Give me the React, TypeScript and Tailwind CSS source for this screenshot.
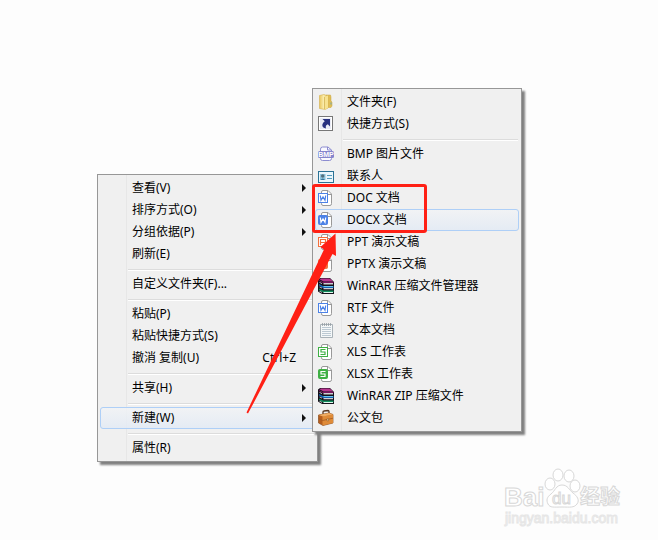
import type { ReactNode } from "react";

const ICON = "h-4 w-4 overflow-visible";

function FolderIcon() {
  return (
    <svg className={ICON} viewBox="0 0 16 16" aria-hidden="true">
      <defs>
        <linearGradient id="folder" x1="0" x2="1">
          <stop offset="0" stopColor="#e9c65c" />
          <stop offset="0.5" stopColor="#fbeeb0" />
          <stop offset="1" stopColor="#d9b545" />
        </linearGradient>
      </defs>
      <path d="M8 1h4.500l.5 2v4l1 1v4l-1 1.500H8z" fill="#e0bd55" stroke="#c9a441" strokeWidth=".5" />
      <path d="M1.500 1.500 6 .5l4 1.500v12l-3 1.500-5.500-1z" fill="url(#folder)" stroke="#d3b04d" strokeWidth=".6" />
      <path d="M6.500 3 10 1.500v12.500l-3.200 1.500z" fill="#f7e391" />
      <path d="M6.500 3v12" stroke="#c9a441" strokeWidth=".6" />
      <path d="M13 8.500v2" stroke="#6fa7b8" />
    </svg>
  );
}

function ShortcutIcon() {
  return (
    <svg className={ICON} viewBox="0 0 16 16" aria-hidden="true">
      <rect x=".5" y=".5" width="14" height="14" fill="#e9ebf5" stroke="#777" />
      <rect x="1.500" y="1.500" width="12" height="12" fill="none" stroke="#fff" />
      <path d="M4.500 3H12v7.500L9.800 8.300C8 9 7.300 10.500 8 12.500 3.800 12 3 8 6.800 5.300z" fill="#27307f" />
    </svg>
  );
}

function BmpIcon() {
  return (
    <svg className={ICON} viewBox="0 0 16 16" aria-hidden="true">
      <path d="M2.500 6V3.200Q2.500 1 4.500 1h5.500l3.500 3v2M2.500 11v1.500q0 2 2 2h7q2 0 2-2V11" fill="#fafaff" stroke="#8c8cd0" />
      <path d="M9.500 1v3h4" fill="none" stroke="#8c8cd0" />
      <rect x="0" y="5" width="16" height="7" rx="1.500" fill="#8585cd" />
      <text x="8" y="11" textAnchor="middle" fill="#fff" className="font-['Liberation_Sans',sans-serif] text-[7px] font-bold">
        BMP
      </text>
    </svg>
  );
}

function ContactIcon() {
  return (
    <svg className={ICON} viewBox="0 0 16 16" aria-hidden="true">
      <rect x=".5" y="3.500" width="15" height="11" fill="#eaf6fb" stroke="#2b7295" />
      <rect x="2" y="6" width="5.500" height="6" fill="#8fc4dc" />
      <circle cx="4.700" cy="8" r="1.700" fill="#55707b" />
      <path d="M2.500 12q2.200-3 4.500 0z" fill="#37769a" />
      <path d="M9 7.500h5M9 10.500h5" stroke="#559bbc" />
    </svg>
  );
}

type OfficeProps = { color: string; letter: "W" | "P" | "S"; filled?: boolean };

function OfficeIcon({ color, letter, filled = false }: OfficeProps) {
  const ink = filled ? "#fff" : color;
  return (
    <svg className={ICON} viewBox="0 0 16 16" aria-hidden="true">
      <path d="M3.500 3V2Q3.500.5 5 .5H10L13.500 4v9.500q0 2-1.500 2H5q-1.500 0-1.500-2z" fill="#fff" stroke="#999" />
      <path d="M9.500.5V4.500h4" fill="none" stroke="#999" />
      <rect x=".5" y="3.500" width="9" height="9" rx={filled ? 1 : 0} fill={filled ? color : "#fff"} stroke={color} />
      {letter === "W" && <path d="M2.300 5.500 3 10.200 5 7l2 3.200.7-4.700" fill="none" stroke={ink} strokeWidth="1.200" />}
      {letter === "P" && <path d="M2.500 11V5.500h5v3h-5" fill="none" stroke={ink} strokeWidth="1.200" />}
      {letter === "S" && <path d="M7.500 5.500h-4.500V8H7v2.500H2.500" fill="none" stroke={ink} strokeWidth="1.200" />}
    </svg>
  );
}

function RarIcon() {
  return (
    <svg className={ICON} viewBox="0 0 16 16" aria-hidden="true">
      <path d="M0 1.500 2 0h10l4 4v12H4L0 13.500z" fill="#15101a" />
      <path d="M1.500 1.300 3 .5h8.500L15.500 3.500H5.500z" fill="#b8348f" />
      <path d="m1 2 4 2h10.500v1H5L1 3z" fill="#7b1560" />
      <path d="M5.500 5.200H15V6.400H5.500z" fill="#fff" />
      <path d="m1 6 4 2h10.500v2H5L1 7.500z" fill="#1764b4" />
      <path d="M5.500 8.500H15" stroke="#69c6ef" />
      <path d="M5.500 10.200H15v1H5.500z" fill="#fff" />
      <path d="m1 10.500 4 2h10.500v1.700H5L1 12z" fill="#14905f" />
      <path d="M5.500 14H15v1H5.500z" fill="#dff7ed" />
      <path d="m1.500 4 2.500 1.200v.8L1.500 4.800zM1.500 8.500l2.500 1.200v.8L1.500 9.300zM1.500 12.700 4 13.900v.8l-2.500-1.200z" fill="#e8e8e8" />
    </svg>
  );
}

function TextIcon() {
  return (
    <svg className={ICON} viewBox="0 0 16 16" aria-hidden="true">
      <path d="M2.500 2.500h12v13h-12z" fill="#f5f8f9" stroke="#a9b2b8" />
      <path d="M4 5.500h9M4 7.500h9M4 9.500h9M4 11.500h9M4 13.500h9" stroke="#bcc9d3" />
      <path d="M4.500 1v3M6.500 1v3M8.500 1v3M10.500 1v3M12.500 1v3" stroke="#949da3" strokeWidth=".8" />
    </svg>
  );
}

function BriefcaseIcon() {
  return (
    <svg className={ICON} viewBox="0 0 16 16" aria-hidden="true">
      <path d="M5 4V2Q5 1 6 1l4-.5q1 0 1 1v2" fill="none" stroke="#5a3923" strokeWidth="1.300" />
      <path d="M.5 5 11 3l4 1.500V13L5 15.500.5 13z" fill="#b75e1d" stroke="#8a4d20" strokeWidth=".7" />
      <path d="M4.500 6.500 15 4.500V13L4.500 15.500z" fill="#df8b38" />
      <path d="M.5 5 11 3l4 1.500-10 2z" fill="#f1ad62" />
      <path d="m.5 8.500 4 2 10.500-2.300" fill="none" stroke="#a35a22" strokeWidth=".8" />
      <path d="M9 8.800h1.500v2H9z" fill="#f7df9b" stroke="#71401e" strokeWidth=".4" />
    </svg>
  );
}

type Item = { label: string; icon?: ReactNode; arrow?: boolean; keys?: string; active?: boolean };

const mainGroups: Item[][] = [
  [
    { label: "查看(V)", arrow: true },
    { label: "排序方式(O)", arrow: true },
    { label: "分组依据(P)", arrow: true },
    { label: "刷新(E)" },
  ],
  [{ label: "自定义文件夹(F)..." }],
  [{ label: "粘贴(P)" }, { label: "粘贴快捷方式(S)" }, { label: "撤消 复制(U)", keys: "Ctrl+Z" }],
  [{ label: "共享(H)", arrow: true }],
  [{ label: "新建(W)", arrow: true, active: true }],
  [{ label: "属性(R)" }],
];

const newGroups: Item[][] = [
  [
    { label: "文件夹(F)", icon: <FolderIcon /> },
    { label: "快捷方式(S)", icon: <ShortcutIcon /> },
  ],
  [
    { label: "BMP 图片文件", icon: <BmpIcon /> },
    { label: "联系人", icon: <ContactIcon /> },
    { label: "DOC 文档", icon: <OfficeIcon color="#4c82e6" letter="W" /> },
    { label: "DOCX 文档", icon: <OfficeIcon color="#4c82e6" letter="W" filled />, active: true },
    { label: "PPT 演示文稿", icon: <OfficeIcon color="#f4703c" letter="P" /> },
    { label: "PPTX 演示文稿", icon: <OfficeIcon color="#f4703c" letter="P" filled /> },
    { label: "WinRAR 压缩文件管理器", icon: <RarIcon /> },
    { label: "RTF 文件", icon: <OfficeIcon color="#4c82e6" letter="W" /> },
    { label: "文本文档", icon: <TextIcon /> },
    { label: "XLS 工作表", icon: <OfficeIcon color="#3fb044" letter="S" /> },
    { label: "XLSX 工作表", icon: <OfficeIcon color="#3fb044" letter="S" filled /> },
    { label: "WinRAR ZIP 压缩文件", icon: <RarIcon /> },
    { label: "公文包", icon: <BriefcaseIcon /> },
  ],
];

function MenuRow({ item }: { item: Item }) {
  const look = item.active
    ? "border-[#aecff7] bg-linear-to-b from-[#f1f3f6]/80 to-[#e2eaf5]/80"
    : "border-transparent";
  return (
    <button
      type="button"
      role="menuitem"
      className={`flex h-[22px] w-full items-center rounded-[3px] border pr-2 text-left whitespace-nowrap ${look}`}
    >
      <span className="flex w-[31px] shrink-0 pl-0.5">{item.icon}</span>
      <span className="grow">{item.label}</span>
      {item.keys && <span className="pr-2.5">{item.keys}</span>}
      {item.arrow && (
        <svg className="h-2 w-1" viewBox="0 0 4 8" aria-hidden="true">
          <path d="M0 0v8l4-4z" fill="#111" />
        </svg>
      )}
    </button>
  );
}

function Menu({ label, groups, className }: { label: string; groups: Item[][]; className: string }) {
  return (
    <div
      role="menu"
      aria-label={label}
      className={`absolute border border-[#979797] bg-[#f0f0f0] bg-linear-to-r from-transparent from-[28px] via-[#dedede] via-[28px] to-transparent to-[29px] p-0.5 shadow-[3px_3px_2px_0_#808080] ${className}`}
    >
      {groups.map((group, index) => (
        <div key={index} role="group">
          {index > 0 && (
            <div role="separator" className="mr-px ml-7 h-2 pt-1">
              <div className="h-0.5 border-t border-[#dcdcdc] bg-white" />
            </div>
          )}
          {group.map((item) => (
            <MenuRow key={item.label} item={item} />
          ))}
        </div>
      ))}
    </div>
  );
}

function Watermark() {
  return (
    <svg
      className="absolute right-[34px] bottom-[10px] h-[64px] w-[122px] overflow-visible"
      viewBox="502 466 122 64"
      role="img"
      aria-label="Baidu 经验"
    >
      <g fill="#fff" stroke="#d8d8d8" strokeWidth="1">
        <text x="504" y="506" className="font-['Liberation_Sans',sans-serif] text-[26px] font-bold">Bai</text>
        <ellipse cx="550" cy="484" rx="5" ry="6" />
        <ellipse cx="558" cy="475" rx="5" ry="6" />
        <ellipse cx="569" cy="476" rx="5" ry="6" />
        <ellipse cx="575" cy="486" rx="5" ry="6" />
        <path d="M562 485c-6 0-7 6-11 9s-5 6-3 10 6 3 14 3 12 1 15-3 0-8-4-11-5-8-11-8z" />
        <text x="552" y="504" className="font-['Liberation_Sans',sans-serif] text-[17px]">du</text>
        <text x="580" y="504" className="font-['Noto_Sans_CJK_SC',sans-serif] text-[20px] font-bold">经验</text>
        <text x="505" y="523" stroke="#e6e6e6" className="font-['Liberation_Sans',sans-serif] text-[14px]">jingyan.baidu.com</text>
      </g>
    </svg>
  );
}

export default function App() {
  return (
    <main className="relative min-h-screen overflow-hidden bg-[#fdfdfd] font-['Noto_Sans','Noto_Sans_CJK_SC',sans-serif] text-[12px] leading-[16px] text-black">
      <Menu label="桌面" groups={mainGroups} className="top-[174px] left-[97px] w-[221px]" />
      <Menu label="新建" groups={newGroups} className="top-[88px] left-[312px] w-[210px]" />
      <div className="pointer-events-none absolute top-[184px] left-[312px] h-[49px] w-[115px] rounded-[3px] border-3 border-[#ff2015]" />
      <svg
        className="pointer-events-none absolute top-[232px] left-[244px] h-[184px] w-[96px]"
        viewBox="244 232 96 184"
        aria-hidden="true"
      >
        <path d="M335.500 233.500 320.500 247l3.500 2.500L246.500 412.500l1.500 1L332.500 254l3.500 2z" fill="#ff2015" />
      </svg>
      <Watermark />
    </main>
  );
}
